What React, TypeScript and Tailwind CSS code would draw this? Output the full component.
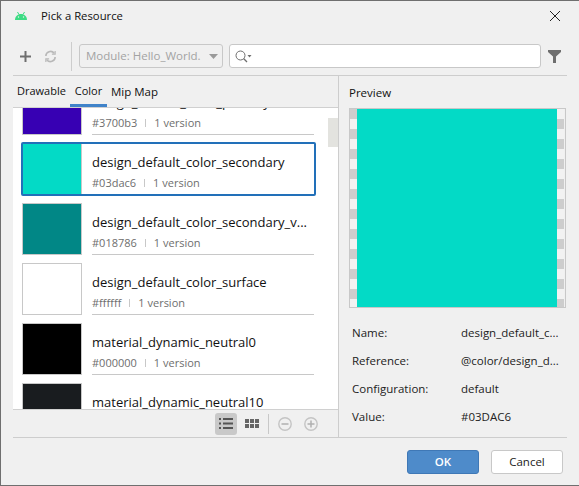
import React from "react";

const font = "font-['Open_Sans','Noto_Sans',sans-serif]";

function Row({ color, name, hex, selected }: { color: string; name: string; hex: string; selected?: boolean }) {
  return (
    <div className="relative h-[60px] pl-[9px] pt-[3px] shrink-0 flex items-start">
      <div className="w-[60px] h-[52px] shrink-0 border border-[#c8c8c8]" style={{ backgroundColor: color }} />
      <div className={`ml-[10px] w-[222px] h-[52px] ${selected ? "" : "border-b border-[#c8c8c8]"}`}>
        <div className="h-[17px] mt-[11px] text-[13px] leading-[17px] text-[#111] whitespace-nowrap">{name}</div>
        <div className="mt-[4px] flex items-center text-[11px] leading-[16px] text-[#6e6e6e]">
          <span>{hex}</span>
          <span className="mx-[8px] w-px h-[8px] bg-[#c8c8c8]" />
          <span>1 version</span>
        </div>
      </div>
      {selected && <div className="absolute left-[8px] top-[2px] w-[295px] h-[54px] rounded-[2px] border-2 border-[#2270b9]" />}
    </div>
  );
}

function Detail({ k, v }: { k: string; v: string }) {
  return (
    <div className="flex h-[28px] items-center text-[11.500px] text-[#222]">
      <span className="w-[109px]">{k}</span>
      <span className="whitespace-nowrap">{v}</span>
    </div>
  );
}

const Strip = ({ flip }: { flip?: boolean }) => (
  <div className={`w-[7px] shrink-0 h-full ${flip ? "bg-[repeating-linear-gradient(180deg,#f2f2f2_0,#f2f2f2_10px,#cdcdcd_10px,#cdcdcd_20px)]" : "bg-[repeating-linear-gradient(180deg,#cdcdcd_0,#cdcdcd_10px,#f2f2f2_10px,#f2f2f2_20px)]"}`} />
);

export default function App() {
  return (
    <div className={`relative w-[579px] h-[486px] bg-[#f0f0f0] border-l border-t border-b border-[#6f6f6f] flex flex-col overflow-hidden ${font}`}>
      <div className="h-[30px] flex items-center pl-[14px] pr-[19px] shrink-0">
        <svg width="12" height="8" viewBox="0 0 12 8">
          <path d="M0 8C0 4.500 2.600 2 6 2s6 2.500 6 6z" fill="#3ddc84" />
          <path d="M2.500 0l1.500 2.600M9.500 0L8 2.600" stroke="#3ddc84" strokeWidth="1" />
          <circle cx="3.500" cy="5" r=".7" fill="#f0f0f0" />
          <circle cx="8.500" cy="5" r=".7" fill="#f0f0f0" />
        </svg>
        <span className="ml-[14px] text-[11.300px] text-[#111]">Pick a Resource</span>
        <svg width="10" height="10" viewBox="0 0 10 10" className="ml-auto">
          <path d="M0 0l10 10M10 0L0 10" stroke="#222" strokeWidth="1" />
        </svg>
      </div>

      <div className="h-[44px] flex items-center pt-[6px] pl-[19px] shrink-0">
        <svg width="11" height="11" viewBox="0 0 11 11">
          <path d="M5.500 0v11M0 5.500h11" stroke="#6e6e6e" strokeWidth="2" />
        </svg>
        <svg width="13" height="13" viewBox="0 0 14 14" className="ml-[13px]" fill="none" stroke="#b8b8b8" strokeWidth="1.700">
          <path d="M2 6.500A5 5 0 0 1 11 3.500" />
          <path d="M12 7.500A5 5 0 0 1 3 10.500" />
          <path d="M12 1v3.500H8.500M2 13V9.500h3.500" strokeWidth="1.300" />
        </svg>
        <div className="ml-[14px] w-px h-[29px] bg-[#cdcdcd]" />
        <div className="ml-[7px] w-[144px] h-[24px] border border-[#c8c8c8] rounded-[3px] flex items-center pl-[6px] text-[11.500px] text-[#a3a3a3] whitespace-nowrap">
          <span>Module: Hello_World.</span>
          <svg width="9" height="5" viewBox="0 0 9 5" className="ml-[8px]"><path d="M0 0h9L4.500 5z" fill="#9a9a9a" /></svg>
        </div>
        <div className="ml-[6px] w-[312px] h-[24px] bg-white border border-[#c8c8c8] rounded-[3px] flex items-center pl-[5px]">
          <svg width="17" height="13" viewBox="0 0 17 13" fill="none">
            <circle cx="5.500" cy="5.500" r="4.500" stroke="#6e6e6e" />
            <path d="M8.800 8.800L12 12" stroke="#6e6e6e" strokeWidth="1.300" />
            <path d="M12.500 5h4L14.500 7.500z" fill="#6e6e6e" />
          </svg>
        </div>
        <svg width="13" height="13" viewBox="0 0 13 13" className="ml-[7px]">
          <path d="M0 0h13v2L8 6.500V13H5V6.500L0 2z" fill="#6e6e6e" />
        </svg>
      </div>

      <div className="flex-1 min-h-0 flex flex-col ml-[12px] mr-[12px] border-b border-t border-[#cdcdcd] mb-[47px]">
        <div className="flex-1 min-h-0 flex">
          <div className="w-[326px] border-r border-[#cdcdcd] flex flex-col">
            <div className="h-[31px] flex items-stretch shrink-0 text-[11px] text-[#111] pl-[4px]">
              <span className="pt-[7px] w-[49px] whitespace-nowrap">Drawable</span>
              <span className="ml-[4px] w-[37px] text-center pt-[7px] border-b-[3px] border-[#4083c9] h-[31px] relative z-10">Color</span>
              <span className="ml-[4px] pt-[7px] text-[11.500px] whitespace-nowrap">Mip Map</span>
            </div>
            <div className="h-[302px] bg-white border-t border-[#d0d0d0] overflow-hidden relative shrink-0">
              <div className="-mt-[28px] flex flex-col">
                <Row color="#3700b3" name="design_default_color_primary" hex="#3700b3" />
                <Row color="#03dac6" name="design_default_color_secondary" hex="#03dac6" selected />
                <Row color="#018786" name="design_default_color_secondary_v..." hex="#018786" />
                <Row color="#ffffff" name="design_default_color_surface" hex="#ffffff" />
                <Row color="#000000" name="material_dynamic_neutral0" hex="#000000" />
                <Row color="#191c1f" name="material_dynamic_neutral10" hex="#444444" />
              </div>
              <div className="absolute right-0 top-[10px] w-[10px] h-[29px] bg-[#e3e3df]" />
            </div>
            <div className="flex-1 min-h-0 border-t border-[#d0d0d0] flex items-center pl-[202px]">
              <div className="w-[22px] h-[22px] rounded-[3px] bg-[#c9c9c9] flex items-center justify-center">
                <svg width="14" height="11" viewBox="0 0 14 11" fill="#555">
                  <path d="M0 0h2v2H0zM4 0h10v2H4zM0 4.500h2v2H0zM4 4.500h10v2H4zM0 9h2v2H0zM4 9h10v2H4z" />
                </svg>
              </div>
              <svg width="14" height="9" viewBox="0 0 14 9" fill="#666" className="ml-[8px]">
                <path d="M0 0h4v4H0zM5 0h4v4H5zM10 0h4v4h-4zM0 5h4v4H0zM5 5h4v4H5zM10 5h4v4h-4z" />
              </svg>
              <div className="ml-[9px] w-px h-[20px] bg-[#c8c8c8]" />
              <svg width="14" height="14" viewBox="0 0 14 14" fill="none" stroke="#c4c4c4" className="ml-[9px]" strokeWidth="1.400">
                <circle cx="7" cy="7" r="6.200" />
                <path d="M3.500 7h7" strokeWidth="1.500" stroke="#b0b0b0" />
              </svg>
              <svg width="14" height="14" viewBox="0 0 14 14" fill="none" stroke="#c4c4c4" className="ml-[12px]" strokeWidth="1.400">
                <circle cx="7" cy="7" r="6.200" />
                <path d="M3.500 7h7M7 3.500v7" strokeWidth="1.500" stroke="#b0b0b0" />
              </svg>
            </div>
          </div>

          <div className="flex-1 min-w-0 pl-[10px] overflow-hidden">
            <div className="h-[32px] pt-[8px] text-[11.500px] leading-[17px] text-[#111]">Preview</div>
            <div className="w-[217px] h-[200px] border border-[#c8c8c8] flex">
              <Strip />
              <div className="w-[200px] h-full bg-[#03dac6]" />
              <Strip flip />
            </div>
            <div className="mt-[11px] pl-[3px]">
              <Detail k="Name:" v="design_default_c..." />
              <Detail k="Reference:" v="@color/design_d..." />
              <Detail k="Configuration:" v="default" />
              <Detail k="Value:" v="#03DAC6" />
            </div>
          </div>
        </div>
      </div>

      <div className="absolute left-[406px] top-[449px] flex gap-[12px]">
        <button className="w-[72px] h-[24px] rounded-[3px] bg-[#4e8bca] border border-[#3f78b6] text-white text-[11.500px] font-semibold">OK</button>
        <button className="w-[72px] h-[24px] rounded-[3px] bg-white border border-[#c8c8c8] text-[#222] text-[11.500px]">Cancel</button>
      </div>
    </div>
  );
}
